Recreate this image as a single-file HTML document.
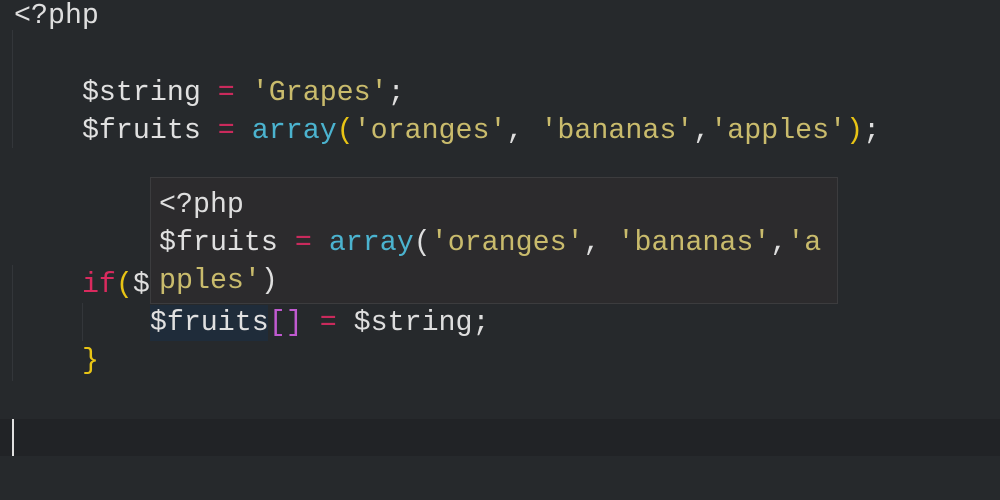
<!DOCTYPE html>
<html><head><style>
html,body{margin:0;padding:0;width:1000px;height:500px;overflow:hidden;background:#26292c;}
.l{position:absolute;left:14px;height:38px;line-height:38px;font-family:"Liberation Mono",monospace;font-size:28.3px;color:#dedede;white-space:pre;}
.v{color:#e0e0e0}.o{color:#c92a5c}.s{color:#c9bb6c}.f{color:#4bb3cf}.p{color:#e8c415}.k{color:#d92a5e}.b{color:#c05ad0}
.g{position:absolute;width:1px;background:#33363a;}
</style></head><body>
<div class="g" style="left:12px;top:30px;height:118px"></div>
<div class="g" style="left:12px;top:265px;height:116px"></div>
<div class="g" style="left:82px;top:303px;height:38px"></div>
<div style="position:absolute;left:0;top:419px;width:1000px;height:37px;background:#212326"></div>
<div style="position:absolute;left:12px;top:419px;width:2px;height:37px;background:#e0e0e0"></div>
<div style="position:absolute;left:150px;top:305px;width:118px;height:36px;background:#1f2c3a"></div>
<div class="l" style="top:-3px">&lt;?php</div>
<div class="l" style="top:74px">    <span class="v">$string</span> <span class="o">=</span> <span class="s">'Grapes'</span>;</div>
<div class="l" style="top:112px">    <span class="v">$fruits</span> <span class="o">=</span> <span class="f">array</span><span class="p">(</span><span class="s">'oranges'</span>, <span class="s">'bananas'</span>,<span class="s">'apples'</span><span class="p">)</span>;</div>
<div class="l" style="top:266px">    <span class="k">if</span><span class="p">(</span>$</div>
<div class="l" style="top:304px">        <span class="v">$fruits</span><span class="b">[]</span> <span class="o">=</span> $string;</div>
<div class="l" style="top:342px">    <span class="p">}</span></div>
<div style="position:absolute;left:150px;top:177px;width:686px;height:125px;background:#2c2b2d;border:1px solid #3c3c3e;"></div>
<div class="l" style="left:159px;top:186px">&lt;?php</div>
<div class="l" style="left:159px;top:224px"><span class="v">$fruits</span> <span class="o">=</span> <span class="f">array</span>(<span class="s">'oranges'</span>, <span class="s">'bananas'</span>,<span class="s">'a</span></div>
<div class="l" style="left:159px;top:262px"><span class="s">pples'</span>)</div>
</body></html>
